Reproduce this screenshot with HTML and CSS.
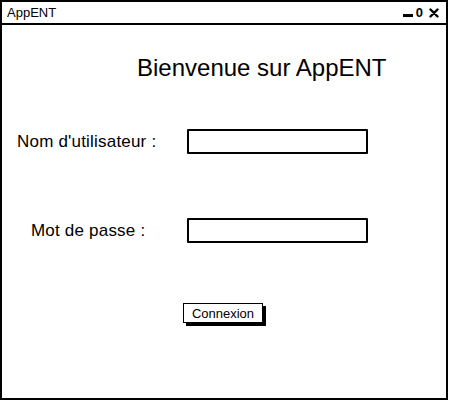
FILE: index.html
```html
<!DOCTYPE html>
<html lang="fr">
<head>
    <meta charset="UTF-8">
    <title>AppENT</title>
    <link rel="stylesheet" href="styles.css">
</head>
<body>
    <div class="window">
        <div class="titlebar">
            <span class="title">AppENT</span>
            <div class="controls">
                <span class="ctl-min"></span>
                <span class="ctl-max">0</span>
                <svg class="ctl-close" width="10" height="10" viewBox="0 0 10 10">
                    <path d="M1.5 1.5 L8.5 8.5 M8.5 1.5 L1.5 8.5" stroke="#000" stroke-width="2.4" stroke-linecap="round"/>
                </svg>
            </div>
        </div>
        <div class="content">
            <h1 class="welcome">Bienvenue sur AppENT</h1>
            <div class="row row-user">
                <label class="label">Nom d'utilisateur :</label>
                <div class="field"></div>
            </div>
            <div class="row row-pass">
                <label class="label">Mot de passe :</label>
                <div class="field"></div>
            </div>
            <div class="actions">
                <button class="btn">Connexion</button>
            </div>
        </div>
    </div>
</body>
</html>
```

FILE: styles.css
```css
body {
    margin: 0;
    font-family: "Liberation Sans", Arial, sans-serif;
    background-color: white;
    color: #000;
}

.window {
    width: 448px;
    height: 400px;
    box-sizing: border-box;
    border: 2px solid #000;
    background-color: white;
}

.titlebar {
    height: 21px;
    border-bottom: 2px solid #000;
    display: flex;
    align-items: center;
    justify-content: space-between;
    padding: 0 7px 0 5px;
}

.title {
    font-size: 13px;
}

.controls {
    display: flex;
    align-items: center;
    gap: 3px;
}

.ctl-min {
    width: 10px;
    height: 3px;
    background-color: #000;
    margin-top: 6px;
}

.ctl-max {
    font-size: 13px;
    font-weight: bold;
    line-height: 12px;
    margin-right: 3px;
}

.content {
    padding-top: 30px;
}

.welcome {
    font-size: 24px;
    font-weight: normal;
    line-height: 26px;
    margin: 0;
    padding-left: 135px;
}

.row {
    display: flex;
    align-items: center;
    height: 25px;
}

.row-user {
    margin-top: 48px;
}

.row-pass {
    margin-top: 64px;
}

.label {
    font-size: 17px;
    line-height: 20px;
    letter-spacing: 0.2px;
}

.row-user .label {
    margin-left: 15px;
    width: 170px;
}

.row-pass .label {
    margin-left: 29px;
    width: 156px;
}

.field {
    width: 177px;
    height: 21px;
    border: 2px solid #000;
    border-radius: 1px;
}

.actions {
    margin-top: 60px;
    padding-left: 181px;
}

.btn {
    font-family: "Liberation Sans", Arial, sans-serif;
    font-size: 13px;
    width: 80px;
    height: 20px;
    padding: 0;
    background-color: white;
    border: 1.5px solid #000;
    box-shadow: 3px 3px 0 #000;
}
```
